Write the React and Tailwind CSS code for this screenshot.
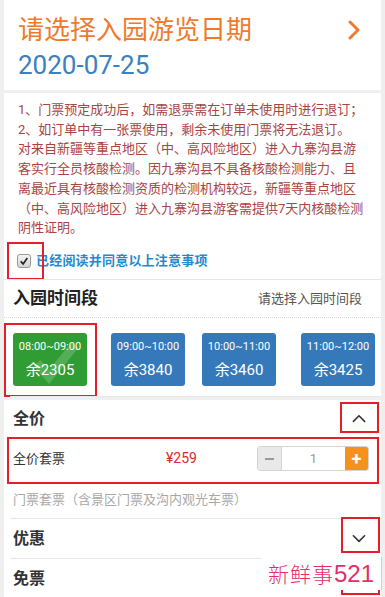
import React from "react";

const F = { fontFamily: 'Roboto, "Noto Sans CJK SC", sans-serif' };

function Chevron({ dir = "right", className = "", color = "#333", sw = 2 }) {
  const d =
    dir === "right"
      ? "M5 2 L13 10 L5 18"
      : dir === "up"
      ? "M2 13 L9 6 L16 13"
      : "M2 6 L9 13 L16 6";
  return (
    <svg viewBox="0 0 18 20" className={className} fill="none">
      <path d={d} stroke={color} strokeWidth={sw} strokeLinecap="round" strokeLinejoin="round" />
    </svg>
  );
}

function Slot({ time, left, green, className }) {
  return (
    <div
      className={`relative w-[74px] h-[53px] rounded-[3px] flex flex-col items-center justify-center text-white overflow-hidden ${
        green ? "bg-[#2f9d34]" : "bg-[#3579bb]"
      } ${className}`}
    >
      {green && (
        <svg viewBox="0 0 74 53" className="absolute inset-0 w-full h-full">
          <path d="M24 30 L36 44 L62 12" stroke="rgba(255,255,255,0.18)" strokeWidth="9" fill="none" />
        </svg>
      )}
      <div className="relative text-[11px] leading-[14px]">{time}</div>
      <div className="relative text-[15px] leading-[20px] mt-[6px]">余{left}</div>
    </div>
  );
}

export default function App() {
  return (
    <div style={F} className="w-[385px] h-[597px] overflow-hidden bg-[#efefef] px-[4px] relative">
      {/* date card */}
      <div className="bg-white h-[90px] pl-[14px] pr-[14px] pt-[12px]">
        <div className="flex items-center justify-between">
          <div className="text-[26px] leading-[36px] text-[#ef7a2c]">请选择入园游览日期</div>
          <Chevron dir="right" color="#ef7a2c" sw={3} className="w-[18px] h-[20px] mr-[4px]" />
        </div>
        <div className="text-[26px] leading-[30px] text-[#3a80c2] mt-[2px]">2020-07-25</div>
      </div>

      {/* notice card */}
      <div className="bg-white mt-[3px] h-[186px] pl-[14px] pr-[8px] pt-[7px] relative">
        <div className="text-[13px] leading-[19.7px] text-[#a94442] whitespace-nowrap">
          <div>1、门票预定成功后，如需退票需在订单未使用时进行退订；</div>
          <div>2、如订单中有一张票使用，剩余未使用门票将无法退订。</div>
          <div>对来自新疆等重点地区（中、高风险地区）进入九寨沟县游</div>
          <div>客实行全员核酸检测。因九寨沟县不具备核酸检测能力、且</div>
          <div>离最近具有核酸检测资质的检测机构较远，新疆等重点地区</div>
          <div>（中、高风险地区）进入九寨沟县游客需提供7天内核酸检测</div>
          <div>阴性证明。</div>
        </div>
        <div className="flex items-center mt-[13px] h-[20px]">
          <div className="w-[14px] h-[14px] ml-[-1px] rounded-[3px] border border-[#9a9a9a] bg-gradient-to-b from-[#f4f4f4] to-[#d4d4d4] flex items-center justify-center">
            <svg viewBox="0 0 12 12" className="w-[10px] h-[10px]">
              <path d="M2 6.5 L5 9.5 L10 2.5" stroke="#222" strokeWidth="2" fill="none" />
            </svg>
          </div>
          <div className="ml-[5px] text-[13px] font-bold text-[#1f8ad0] tracking-[0.2px]">已经阅读并同意以上注意事项</div>
        </div>
        <div className="absolute left-[3px] top-[149px] w-[37px] h-[38px] border-2 border-[#e3202a]" />
      </div>

      {/* time card */}
      <div className="bg-white border-t border-[#e6e6e6] h-[118px] relative">
        <div className="h-[38px] flex items-center justify-between pl-[9px] pr-[19px] border-b border-dotted border-[#d8d8d8]">
          <div className="text-[17px] font-bold text-[#222]">入园时间段</div>
          <div className="text-[13px] text-[#555]">请选择入园时间段</div>
        </div>
        <div className="flex pt-[15px] pl-[9px]">
          <Slot time="08:00~09:00" left="2305" green />
          <Slot time="09:00~10:00" left="3840" className="ml-[24px]" />
          <Slot time="10:00~11:00" left="3460" className="ml-[17px]" />
          <Slot time="11:00~12:00" left="3425" className="ml-[25px]" />
        </div>
        <div className="absolute left-0 top-[43px] w-[93px] h-[74px] border-2 border-[#e3202a]" />
        <div className="absolute left-[6px] right-0 bottom-0 border-b border-[#e8e8e8]" />
      </div>

      {/* price card */}
      <div className="bg-white mt-[3px] relative h-[200px]">
        <div className="h-[37px] flex items-center justify-between pl-[9px] pr-[13px]">
          <div className="text-[16px] font-bold text-[#333]">全价</div>
          <Chevron dir="up" color="#333" sw={2} className="w-[16px] h-[16px] mr-[1px]" />
        </div>
        <div className="absolute left-[336px] top-[2px] w-[39px] h-[31px] border-2 border-[#e3202a]" />
        <div className="h-[43px] flex items-center pl-[9px] pr-[12px] relative">
          <div className="w-[153px] text-[13px] text-[#333]">全价套票</div>
          <div className="text-[14px] text-[#d62a2a]">¥259</div>
          <div className="ml-auto flex h-[25px] rounded-[3px] overflow-hidden border border-[#d4d4d4]">
            <div className="w-[24px] bg-[#e9e9e9] flex items-center justify-center border-r border-[#d4d4d4]">
              <div className="w-[9px] h-[2px] bg-[#999]" />
            </div>
            <div className="w-[63px] bg-white flex items-center justify-center text-[13px] text-[#999]">1</div>
            <div className="w-[23px] bg-[#f6911e] flex items-center justify-center text-white text-[18px] font-bold leading-none">+</div>
          </div>
          <div className="absolute left-[3px] right-[2px] top-0 bottom-[-4px] border-2 border-[#e3202a]" />
        </div>
        <div className="h-[36px] flex items-center pl-[9px] text-[13px] text-[#a8a8a8] mt-[2px]">
          门票套票（含景区门票及沟内观光车票）
        </div>
        <div className="ml-[6px] border-t border-[#e6e6e6] h-[40px] flex items-center justify-between pl-[3px] pr-[13px]">
          <div className="text-[16px] font-bold text-[#333]">优惠</div>
          <Chevron dir="down" color="#333" sw={2} className="w-[16px] h-[16px] mr-[1px]" />
        </div>
        <div className="ml-[6px] mr-[120px] border-t border-[#e6e6e6]" />
        <div className="h-[39px] flex items-center pl-[9px]">
          <div className="text-[16px] font-bold text-[#333]">免票</div>
        </div>
        <div className="ml-[6px] border-t border-[#e6e6e6]" />
        <div className="absolute left-[337px] top-[117px] w-[39px] h-[36px] border-2 border-[#e3202a]" />
        <div className="absolute left-[337px] top-[158px] w-[39px] h-[37px] border-2 border-[#e3202a]" />
        <div className="absolute left-[258px] top-[157px] w-[120px] h-[33px] bg-white border-r border-[#cfcfcf] flex items-center pl-[6px] whitespace-nowrap">
          <span className="text-[21px] leading-none text-[#e42d6a] font-light tracking-[1px]" style={{ fontFamily: '"Noto Sans CJK SC", sans-serif' }}>新鲜事</span>
          <span className="text-[24px] leading-none text-[#e42d6a]" style={{ fontFamily: '"Liberation Sans", sans-serif' }}>521</span>
        </div>
      </div>
    </div>
  );
}
